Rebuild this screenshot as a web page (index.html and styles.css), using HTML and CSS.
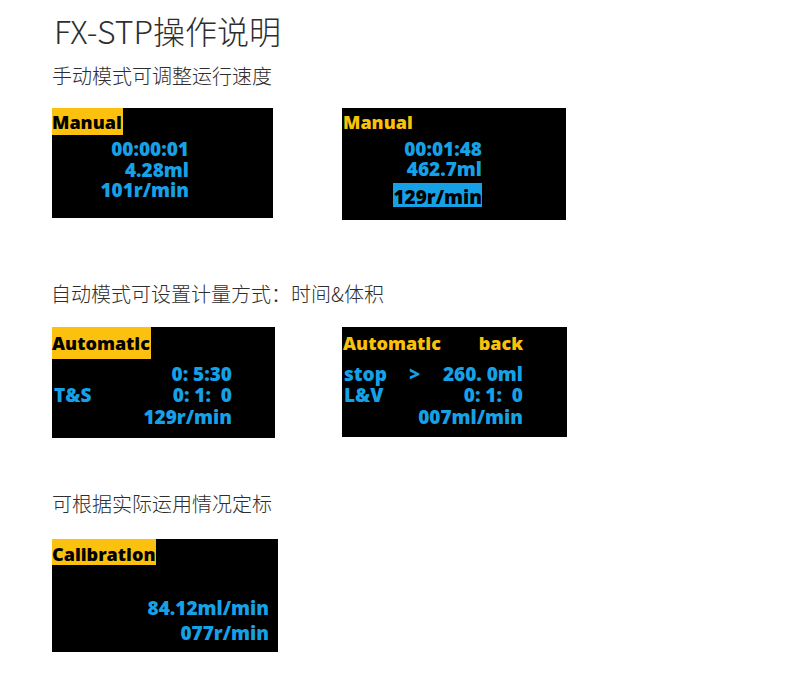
FILE: index.html
```html
<!DOCTYPE html>
<html lang="zh-CN">
<head>
<meta charset="utf-8">
<title>FX-STP操作说明</title>
<link rel="stylesheet" href="styles.css">
</head>
<body>
<div class="page">
  <h1 class="title">FX-STP操作说明</h1>

  <h2 class="heading heading-1">手动模式可调整运行速度</h2>
  <div class="row row-1">
    <div class="screen screen-m1">
      <div class="tag tag-fill tag-m">Manual</div>
      <div class="lines lines-m1">
        <div class="ln">00:00:01</div>
        <div class="ln">4.28ml</div>
        <div class="ln">101r/min</div>
      </div>
    </div>
    <div class="screen screen-m2">
      <div class="tag tag-text tag-m">Manual</div>
      <div class="lines lines-m2">
        <div class="ln">00:01:48</div>
        <div class="ln">462.7ml</div>
        <div class="ln ln-sel"><span class="sel">129r/min</span></div>
      </div>
    </div>
  </div>

  <h2 class="heading heading-2">自动模式可设置计量方式：时间&amp;体积</h2>
  <div class="row row-2">
    <div class="screen screen-a1">
      <div class="tag tag-fill tag-a">Automatic</div>
      <div class="lines lines-a">
        <div class="ln ln-split"><span class="val">0: 5:30</span></div>
        <div class="ln ln-split"><span class="key">T&amp;S</span><span class="val">0: 1:  0</span></div>
        <div class="ln ln-split"><span class="val">129r/min</span></div>
      </div>
    </div>
    <div class="screen screen-a2">
      <div class="tag tag-text tag-a tag-row"><span>Automatic</span><span class="back">back</span></div>
      <div class="lines lines-a lines-a2">
        <div class="ln ln-split"><span class="key key-w">stop</span><span class="arrow">&gt;</span><span class="val">260. 0ml</span></div>
        <div class="ln ln-split"><span class="key">L&amp;V</span><span class="val">0: 1:  0</span></div>
        <div class="ln ln-split"><span class="val">007ml/min</span></div>
      </div>
    </div>
  </div>

  <h2 class="heading heading-3">可根据实际运用情况定标</h2>
  <div class="row row-3">
    <div class="screen screen-c">
      <div class="tag tag-fill tag-c">Calibration</div>
      <div class="lines lines-c">
        <div class="ln">84.12ml/min</div>
        <div class="ln">077r/min</div>
      </div>
    </div>
  </div>
</div>
</body>
</html>
```

FILE: styles.css
```css
html, body {
  margin: 0;
  padding: 0;
  background: #ffffff;
}

.page {
  padding: 14px 0 0 52px;
  font-family: "Noto Sans CJK SC", "Noto Sans", sans-serif;
  color: #2e2e2e;
}

.title {
  margin: 0 0 0 2px;
  font-size: 32px;
  line-height: 32px;
  font-weight: 300;
}

.heading {
  margin: 0;
  font-size: 20px;
  line-height: 20px;
  font-weight: 300;
}

.heading-1 { margin-top: 20px; }
.heading-2 { margin-top: 64px; margin-left: -1px; }
.heading-3 { margin-top: 56px; }

.row {
  display: grid;
  grid-template-columns: 290px auto;
  align-items: start;
}

.row-1 { margin-top: 22px; }
.row-2 { margin-top: 23px; }
.row-3 { margin-top: 25px; }

.screen {
  background: #000000;
  font-family: "Open Sans", "Liberation Sans", sans-serif;
  font-weight: 800;
  color: #16a1e7;
  display: flex;
  flex-direction: column;
  align-items: flex-start;
}

.screen-m1 { width: 221px; height: 110px; }
.screen-m2 { width: 224px; height: 112px; }
.screen-a1 { width: 223px; height: 111px; }
.screen-a2 { width: 225px; height: 110px; }
.screen-c  { width: 226px; height: 113px; }

.tag {
  font-size: 18px;
  white-space: nowrap;
}

.tag-fill {
  background: #fcc10e;
  color: #000000;
  padding: 0 1px 0 0;
}

.tag-text {
  color: #f9c20a;
  padding-left: 1px;
}

.tag-m {
  padding-top: 2px;
  height: 25px;
  line-height: 25px;
}

.tag-a {
  height: 32px;
  line-height: 32px;
}

.tag-c {
  padding-top: 4px;
  height: 22px;
  line-height: 22px;
}

.tag-row {
  display: flex;
  width: 180px;
}

.back {
  margin-left: auto;
}

.lines {
  font-size: 19px;
  text-align: right;
}

.ln {
  white-space: pre;
}

.lines-m1 {
  width: 137px;
  margin-top: 4px;
  line-height: 20.5px;
}

.lines-m2 {
  width: 140px;
  margin-top: 4px;
  line-height: 20px;
}

.ln-sel {
  margin-top: 4px;
}

.sel {
  display: inline-block;
  background: #16a1e7;
  color: #000000;
  padding-top: 5px;
  line-height: 19px;
}

.lines-a {
  width: 180px;
  margin-top: 4.5px;
  line-height: 21.5px;
}

.lines-a2 {
  width: 181px;
}

.ln-split {
  display: flex;
  justify-content: flex-end;
}

.ln-split .key {
  margin-right: auto;
  padding-left: 2px;
}

.ln-split .key-w {
  width: 65px;
  margin-right: 0;
  text-align: left;
}

.ln-split .arrow + .val {
  margin-left: auto;
}

.lines-c {
  width: 217px;
  margin-top: 31px;
  line-height: 25px;
}
```
